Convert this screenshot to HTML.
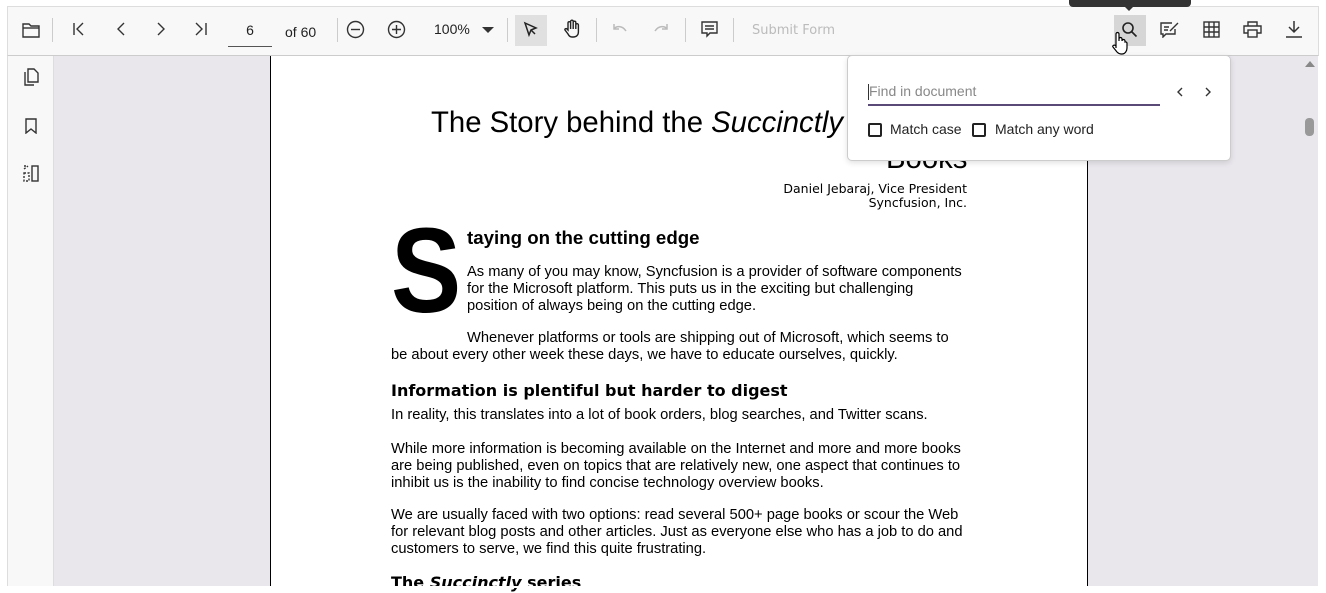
<!DOCTYPE html>
<html><head><meta charset="utf-8"><style>
*{box-sizing:border-box;margin:0;padding:0}
body{width:1326px;height:588px;overflow:hidden;background:#fff;font-family:"Liberation Sans",sans-serif;position:relative}
.a{position:absolute}
.tb{left:7px;top:6px;width:1312px;height:50px;background:#f8f8f8;border:1px solid #ddd;border-bottom:1px solid #ccc}
.sb{left:7px;top:56px;width:47px;height:531px;background:#f8f8f8;border-left:1px solid #ddd;border-right:1px solid #ddd}
.gray{left:54px;top:56px;width:1264px;height:531px;background:#e9e7ec;border-bottom:1px solid #ccc}
.page{left:270px;top:56px;width:818px;height:531px;background:#fff;border-left:1.5px solid #000;border-right:1.5px solid #000}
.sep{position:absolute;top:18px;width:1px;height:24px;background:#ccc}
svg{position:absolute}
.t{position:absolute;color:#000;font-size:14.7px;line-height:17px;white-space:nowrap}
.h{font-family:"DejaVu Sans",sans-serif;font-weight:bold;font-size:16px}
</style></head><body>
<div class="a tb"></div>
<div class="a gray"></div>
<div class="a page"></div>
<div class="a sb"></div>
<svg style="left:22px;top:22px" width="18" height="16" viewBox="0 0 18 16" fill="none" stroke="#333" stroke-width="1.4"><path d="M1 2h6l2 2h8v11H1z"/><path d="M1 6h16"/></svg>
<div class="sep" style="left:52px;top:18px"></div>
<svg style="left:72px;top:22px" width="14" height="14" fill="none" stroke="#333" stroke-width="1.4"><path d="M2 1v12M11 1L5 7l6 6"/></svg>
<svg style="left:114px;top:22px" width="14" height="14" fill="none" stroke="#333" stroke-width="1.4"><path d="M10 1L4 7l6 6"/></svg>
<svg style="left:154px;top:22px" width="14" height="14" fill="none" stroke="#333" stroke-width="1.4"><path d="M4 1l6 6-6 6"/></svg>
<svg style="left:194px;top:22px" width="14" height="14" fill="none" stroke="#333" stroke-width="1.4"><path d="M2 1l6 6-6 6M12 1v12"/></svg>
<div class="t" style="left:228px;top:22px;width:44px;text-align:center;font-size:14px;color:#222">6</div>
<div class="a" style="left:228px;top:46px;width:44px;height:1px;background:#555"></div>
<div class="t" style="left:285px;top:24px;font-size:14px;color:#222">of 60</div>
<div class="sep" style="left:337px"></div>
<svg style="left:346px;top:20px" width="19" height="19" fill="none" stroke="#333" stroke-width="1.4"><circle cx="9.5" cy="9.5" r="8"/><path d="M5 9.5h9"/></svg>
<svg style="left:387px;top:20px" width="19" height="19" fill="none" stroke="#333" stroke-width="1.4"><circle cx="9.5" cy="9.5" r="8"/><path d="M5 9.5h9M9.5 5v9"/></svg>
<div class="t" style="left:434px;top:21px;font-size:14px;color:#222">100%</div>
<svg style="left:482px;top:27px" width="12" height="7"><path d="M0 0h12L6 6z" fill="#333"/></svg>
<div class="sep" style="left:507px"></div>
<div class="a" style="left:515px;top:15px;width:32px;height:31px;background:#e0e0e0"></div>
<svg style="left:523px;top:21px" width="16" height="18" fill="none" stroke="#222" stroke-width="1.5"><path d="M2 2l11 5-5 2-2 5z"/><path d="M8 9l4 4"/></svg>
<svg style="left:563px;top:19px" width="18" height="20" fill="none" stroke="#222" stroke-width="1.4"><path d="M5 11V4a1.3 1.3 0 012.6 0v6V2.5a1.3 1.3 0 012.6 0V10V3.5a1.3 1.3 0 012.6 0V10V6a1.3 1.3 0 012.6 0v7c0 3-2 5-5 5H9c-2 0-3-1-4-3l-3-4c-.5-1 1-2 2-1z"/></svg>
<div class="sep" style="left:596px"></div>
<svg style="left:612px;top:23px" width="16" height="12" fill="none" stroke="#bbb" stroke-width="1.5"><path d="M2 1v5h5M2 6c2-3 8-4 12 2"/></svg>
<svg style="left:653px;top:23px" width="16" height="12" fill="none" stroke="#bbb" stroke-width="1.5"><path d="M14 1v5H9M14 6C12 3 6 2 2 8"/></svg>
<div class="sep" style="left:685px"></div>
<svg style="left:701px;top:21px" width="17" height="17" fill="none" stroke="#333" stroke-width="1.4"><path d="M1 1h15v11H9l-3 3v-3H1z"/><path d="M4 5h9M4 8h9"/></svg>
<div class="sep" style="left:733px"></div>
<div class="t" style="left:752px;top:22px;color:#bbb;font-family:'DejaVu Sans',sans-serif;font-size:13px">Submit Form</div>
<div class="a" style="left:1069px;top:0;width:122px;height:7px;background:#333;border-radius:0 0 4px 4px"></div>
<svg style="left:1124px;top:6px" width="10" height="6"><path d="M0 0h10L5 5z" fill="#333"/></svg>
<div class="a" style="left:1114px;top:15px;width:32px;height:31px;background:#d6d6d6"></div>
<svg style="left:1121px;top:21px" width="18" height="18" fill="none" stroke="#222" stroke-width="1.6"><circle cx="7" cy="7" r="5"/><path d="M10.5 10.5l5 5"/></svg>
<svg style="left:1112px;top:30px" width="16" height="26" fill="#fff" stroke="#000" stroke-width="1.2"><path d="M4 18V4a1.5 1.5 0 013 0v7V9a1.5 1.5 0 013 0v2a1.5 1.5 0 013 0v1a1.5 1.5 0 012 1v5c0 3-2 6-5 6H9c-2 0-3-1-4-2l-4-5c-1-1 1-3 3-1z"/></svg>
<svg style="left:1160px;top:21px" width="19" height="17" fill="none" stroke="#333" stroke-width="1.4"><path d="M12 2H1v11h2v3l3-3h9V8"/><path d="M4 6h5M4 9h4M10 10l8-8"/></svg>
<svg style="left:1203px;top:21px" width="17" height="17" fill="none" stroke="#333" stroke-width="1.4"><rect x="1" y="1" width="15" height="15"/><path d="M6 1v15M11 1v15M1 6h15M1 11h15"/></svg>
<svg style="left:1243px;top:21px" width="19" height="17" fill="none" stroke="#333" stroke-width="1.4"><path d="M5 5V1h9v4M5 12H1V5h17v7h-4"/><rect x="5" y="9" width="9" height="7"/></svg>
<svg style="left:1285px;top:20px" width="18" height="18" fill="none" stroke="#333" stroke-width="1.5"><path d="M9 1v11M4 7l5 5 5-5M1 17h16"/></svg>
<svg style="left:22px;top:68px" width="17" height="18" fill="none" stroke="#333" stroke-width="1.4"><path d="M6 1h6l4 4v9H6z"/><path d="M3 4v13h9"/></svg>
<svg style="left:25px;top:118px" width="12" height="16" fill="none" stroke="#333" stroke-width="1.4"><path d="M1 1h10v14l-5-4-5 4z"/></svg>
<svg style="left:22px;top:165px" width="18" height="17" fill="none" stroke="#333" stroke-width="1.4"><rect x="10" y="1" width="6" height="15"/><path d="M2 4l4-3M2 1h3M2 8h5v8H2z" stroke-dasharray="2 1.5"/></svg>
<svg style="left:1305px;top:60px" width="10" height="8"><path d="M0 7h10L5 1z" fill="#888"/></svg>
<div class="a" style="left:1305px;top:118px;width:9px;height:18px;background:#999;border-radius:4px"></div>
<div class="t" style="left:431px;top:106px;font-size:29.3px;line-height:34px">The Story behind the <i>Succinctly</i></div>
<div class="t" style="left:886px;top:142px;font-size:29.3px;line-height:34px">Books</div>
<div class="t" style="left:700px;top:182px;width:267px;text-align:right;font-family:'DejaVu Sans',sans-serif;font-size:12.5px;line-height:14px">Daniel Jebaraj, Vice President<br>Syncfusion, Inc.</div>
<div class="t" style="left:391px;top:200px;font-size:121px;line-height:140px;font-weight:bold;transform:scaleX(0.87);transform-origin:left">S</div>
<div class="t" style="left:467px;top:228px;font-size:18.7px;line-height:20px;font-weight:bold">taying on the cutting edge</div>
<div class="t" style="left:467px;top:264px">As many of you may know, Syncfusion is a provider of software components<br>for the Microsoft platform. This puts us in the exciting but challenging<br>position of always being on the cutting edge.</div>
<div class="t" style="left:467px;top:330px">Whenever platforms or tools are shipping out of Microsoft, which seems to</div>
<div class="t" style="left:391px;top:347px">be about every other week these days, we have to educate ourselves, quickly.</div>
<div class="t h" style="left:391px;top:381px;line-height:20px">Information is plentiful but harder to digest</div>
<div class="t" style="left:391px;top:407px">In reality, this translates into a lot of book orders, blog searches, and Twitter scans.</div>
<div class="t" style="left:391px;top:441px">While more information is becoming available on the Internet and more and more books<br>are being published, even on topics that are relatively new, one aspect that continues to<br>inhibit us is the inability to find concise technology overview books.</div>
<div class="t" style="left:391px;top:507px">We are usually faced with two options: read several 500+ page books or scour the Web<br>for relevant blog posts and other articles. Just as everyone else who has a job to do and<br>customers to serve, we find this quite frustrating.</div>
<div class="t h" style="left:391px;top:573px;line-height:20px">The <i>Succinctly</i> series</div>
<div class="a" style="left:0;top:586px;width:1326px;height:2px;background:#fff"></div>
<div class="a" style="left:847px;top:55px;width:384px;height:106px;background:#fff;border:1px solid #ccc;border-radius:5px;box-shadow:0 2px 6px rgba(0,0,0,.12)"></div>
<div class="a" style="left:868px;top:84px;width:1px;height:16px;background:#333"></div>
<div class="t" style="left:869px;top:83px;font-size:14px;color:#888">Find in document</div>
<div class="a" style="left:868px;top:104px;width:292px;height:2px;background:#5a4a78"></div>
<svg style="left:1176px;top:87px" width="8" height="10" fill="none" stroke="#333" stroke-width="1.4"><path d="M6 1L2 5l4 4"/></svg>
<svg style="left:1204px;top:87px" width="8" height="10" fill="none" stroke="#333" stroke-width="1.4"><path d="M2 1l4 4-4 4"/></svg>
<div class="a" style="left:868px;top:123px;width:14px;height:14px;border:2px solid #222;border-radius:2px"></div>
<div class="t" style="left:890px;top:121px;font-size:14px;color:#222">Match case</div>
<div class="a" style="left:972px;top:123px;width:14px;height:14px;border:2px solid #222;border-radius:2px"></div>
<div class="t" style="left:995px;top:121px;font-size:14px;color:#222">Match any word</div>
</body></html>
